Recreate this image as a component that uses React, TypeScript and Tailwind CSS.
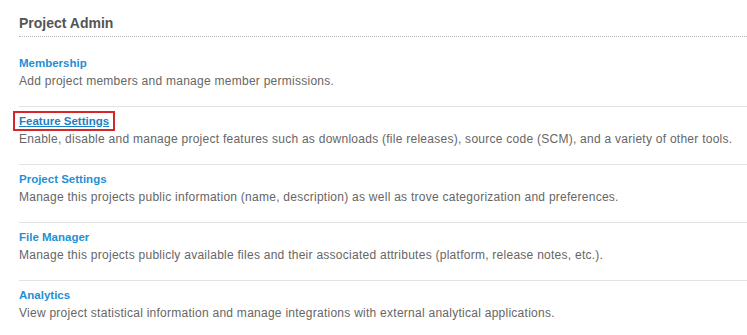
import React from "react";

const items = [
  { title: "Membership", desc: "Add project members and manage member permissions." },
  {
    title: "Feature Settings",
    desc: "Enable, disable and manage project features such as downloads (file releases), source code (SCM), and a variety of other tools.",
    highlight: true,
  },
  {
    title: "Project Settings",
    desc: "Manage this projects public information (name, description) as well as trove categorization and preferences.",
  },
  {
    title: "File Manager",
    desc: "Manage this projects publicly available files and their associated attributes (platform, release notes, etc.).",
  },
  {
    title: "Analytics",
    desc: "View project statistical information and manage integrations with external analytical applications.",
  },
];

export default function App() {
  return (
    <div
      className="w-[747px] h-[335px] bg-white pl-[19px] overflow-hidden"
      style={{ fontFamily: '"Liberation Sans", Arial, sans-serif' }}
    >
      <div className="pt-[15px] pb-[5px] border-b border-dotted border-[#b5b5b5]">
        <h2 className="text-[14px] leading-[16px] font-bold text-[#555555]">Project Admin</h2>
      </div>
      <ul className="mt-[12px]">
        {items.map((it, i) => (
          <li
            key={it.title}
            className={`pt-[7px] pb-[17px] ${i < items.length - 1 ? "border-b border-[#e2e2e2]" : ""}`}
          >
            <div className="text-[11.5px] leading-[14px] font-bold">
              {it.highlight ? (
                <span className="inline-block border-2 border-[#d7262b] px-[4px] -mx-[6px] py-[1px] -my-[3px]">
                  <a href="#" className="text-[#1b7fc4] underline">
                    {it.title}
                  </a>
                </span>
              ) : (
                <a href="#" className="text-[#1f8fd6]">
                  {it.title}
                </a>
              )}
            </div>
            <p className="mt-[3px] text-[12px] leading-[16px] tracking-[0.26px] text-[#666666]">{it.desc}</p>
          </li>
        ))}
      </ul>
    </div>
  );
}
